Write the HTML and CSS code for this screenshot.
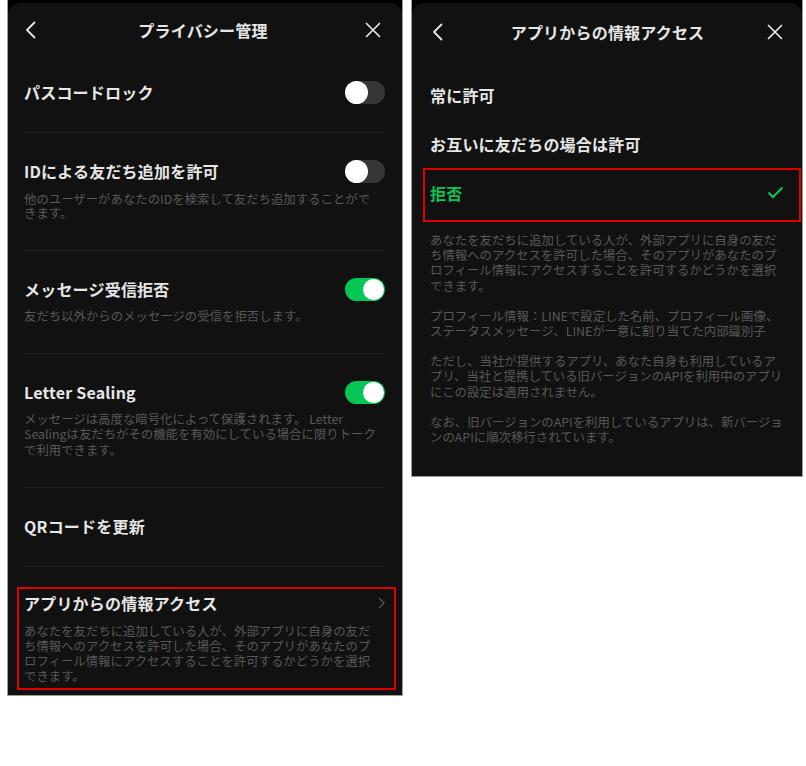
FILE: index.html
```html
<!DOCTYPE html>
<html lang="ja">
<head>
<meta charset="utf-8">
<title>プライバシー管理</title>
<link rel="stylesheet" href="styles.css">
</head>
<body>
<div class="page">
  <section class="phone phone-left">
    <div class="sheet">
      <header class="nav">
        <svg class="nav-back" width="11" height="18" viewBox="0 0 11 18"><path d="M9.5 1.5 L2 9 L9.5 16.5" stroke="#e6e6e6" stroke-width="1.8" fill="none" stroke-linecap="round" stroke-linejoin="round"/></svg>
        <h1 class="nav-title">プライバシー管理</h1>
        <svg class="nav-close" width="16" height="16" viewBox="0 0 16 16"><path d="M1.5 1.5 L14.5 14.5 M14.5 1.5 L1.5 14.5" stroke="#e6e6e6" stroke-width="1.7" stroke-linecap="round"/></svg>
      </header>

      <div class="row row-first">
        <div class="row-head"><span class="title">パスコードロック</span><span class="toggle"></span></div>
      </div>

      <div class="row row-id">
        <div class="row-head"><span class="title">IDによる友だち追加を許可</span><span class="toggle"></span></div>
        <p class="desc desc-tight">他のユーザーがあなたのIDを検索して友だち追加することがで<br>きます。</p>
      </div>

      <div class="row">
        <div class="row-head"><span class="title">メッセージ受信拒否</span><span class="toggle on"></span></div>
        <p class="desc">友だち以外からのメッセージの受信を拒否します。</p>
      </div>

      <div class="row">
        <div class="row-head"><span class="title">Letter Sealing</span><span class="toggle on"></span></div>
        <p class="desc">メッセージは高度な暗号化によって保護されます。 Letter<br>Sealingは友だちがその機能を有効にしている場合に限りトーク<br>で利用できます。</p>
      </div>

      <div class="row">
        <div class="row-head"><span class="title">QRコードを更新</span></div>
      </div>

      <div class="row row-last">
        <div class="row-head">
          <span class="title">アプリからの情報アクセス</span>
          <svg class="chev" width="7" height="12" viewBox="0 0 7 12"><path d="M1 1 L6 6 L1 11" stroke="#505050" stroke-width="1.4" fill="none"/></svg>
        </div>
        <p class="desc">あなたを友だちに追加している人が、外部アプリに自身の友だ<br>ち情報へのアクセスを許可した場合、そのアプリがあなたのプ<br>ロフィール情報にアクセスすることを許可するかどうかを選択<br>できます。</p>
        <div class="mark mark-left"></div>
      </div>
    </div>
  </section>

  <section class="phone phone-right">
    <div class="sheet">
      <header class="nav nav-right">
        <svg class="nav-back" width="11" height="18" viewBox="0 0 11 18"><path d="M9.5 1.5 L2 9 L9.5 16.5" stroke="#e6e6e6" stroke-width="1.8" fill="none" stroke-linecap="round" stroke-linejoin="round"/></svg>
        <h1 class="nav-title">アプリからの情報アクセス</h1>
        <svg class="nav-close" width="16" height="16" viewBox="0 0 16 16"><path d="M1.5 1.5 L14.5 14.5 M14.5 1.5 L1.5 14.5" stroke="#e6e6e6" stroke-width="1.7" stroke-linecap="round"/></svg>
      </header>

      <ul class="options">
        <li class="option"><span class="title">常に許可</span></li>
        <li class="option"><span class="title">お互いに友だちの場合は許可</span></li>
        <li class="option selected">
          <span class="title">拒否</span>
          <svg class="check" width="17" height="13" viewBox="0 0 17 13"><path d="M1.5 6.5 L6 11 L15.5 1.5" stroke="#06c755" stroke-width="2" fill="none"/></svg>
          <div class="mark mark-right"></div>
        </li>
      </ul>

      <div class="info">
        <p class="desc">あなたを友だちに追加している人が、外部アプリに自身の友だ<br>ち情報へのアクセスを許可した場合、そのアプリがあなたのプ<br>ロフィール情報にアクセスすることを許可するかどうかを選択<br>できます。</p>
        <p class="desc">プロフィール情報：LINEで設定した名前、プロフィール画像、<br>ステータスメッセージ、LINEが一意に割り当てた内部識別子</p>
        <p class="desc">ただし、当社が提供するアプリ、あなた自身も利用しているア<br>プリ、当社と提携している旧バージョンのAPIを利用中のアプリ<br>にこの設定は適用されません。</p>
        <p class="desc">なお、旧バージョンのAPIを利用しているアプリは、新バージョ<br>ンのAPIに順次移行されています。</p>
      </div>
    </div>
  </section>
</div>
</body>
</html>
```

FILE: styles.css
```css
html, body {
  margin: 0;
  padding: 0;
  background: #ffffff;
}

body {
  width: 806px;
  height: 766px;
  overflow: hidden;
  font-family: "Noto Sans CJK JP", "Noto Sans", sans-serif;
}

.page {
  display: flex;
  align-items: flex-start;
  gap: 8px;
  padding-left: 7px;
}

.phone {
  box-sizing: border-box;
  background: #000;
  border: 1px solid #9c9c9c;
  border-top: none;
  display: flex;
  flex-direction: column;
  overflow: hidden;
}

.phone-left {
  width: 396px;
  height: 696px;
}

.phone-right {
  width: 392px;
  height: 477px;
}

.sheet {
  flex: 1;
  margin-top: 3px;
  background: #111111;
  border-radius: 12px 12px 0 0;
}

.nav {
  height: 53px;
  padding: 0 21px 0 17px;
  display: grid;
  grid-template-columns: 1fr auto 1fr;
  align-items: center;
}

.nav-right {
  padding: 4px 19px 0 20px;
  height: 50px;
}

.nav-back {
  justify-self: start;
}

.nav-close {
  justify-self: end;
}

.nav-title {
  margin: 0;
  font-size: 16px;
  font-weight: 700;
  color: #e6e6e6;
  line-height: 22px;
  letter-spacing: 0.2px;
}

.nav + .row {
  margin-top: 1px;
}

.row {
  position: relative;
  margin: 0 17px 0 16px;
  padding: 27px 0 29px;
  border-bottom: 1px solid #202020;
}

.row-first {
  padding-top: 24px;
  padding-bottom: 29px;
}

.row-id {
  padding-bottom: 30px;
}

.row-last {
  border-bottom: none;
  padding-top: 25px;
}

.row-head {
  display: flex;
  align-items: center;
  justify-content: space-between;
  height: 22px;
}

.title {
  font-size: 16px;
  font-weight: 700;
  color: #e6e6e6;
  line-height: 22px;
  letter-spacing: 0.2px;
}

.desc {
  margin: 9px 0 0;
  font-size: 12.4px;
  line-height: 15.2px;
  color: #585858;
  white-space: nowrap;
}

.desc-tight {
  line-height: 14px;
  margin-top: 10px;
}

.row-last .desc {
  margin-top: 10px;
}

.toggle {
  position: relative;
  width: 40px;
  height: 23px;
  border-radius: 12px;
  background: #363636;
  flex: none;
}

.toggle::after {
  content: "";
  position: absolute;
  top: 0;
  left: 0;
  width: 23px;
  height: 23px;
  border-radius: 50%;
  background: #ffffff;
}

.toggle.on {
  background: #06c755;
}

.toggle.on::after {
  left: auto;
  right: 1px;
  top: 1px;
  width: 21px;
  height: 21px;
}

.mark {
  position: absolute;
  border: 2px solid #e00000;
  box-sizing: border-box;
  pointer-events: none;
}

.mark-left {
  top: 20px;
  left: -7px;
  width: 379px;
  height: 103px;
}

.options {
  list-style: none;
  margin: 0;
  padding: 13px 0 0;
}

.option {
  position: relative;
  height: 49px;
  display: flex;
  align-items: center;
  justify-content: space-between;
  padding: 0 18px 0 18px;
}

.option.selected .title {
  color: #06c755;
}

.mark-right {
  top: 0;
  left: 11px;
  right: 1px;
  height: 54px;
}

.info {
  padding: 16px 17px 0 18px;
}

.info .desc {
  margin: 0 0 15px;
}
```
